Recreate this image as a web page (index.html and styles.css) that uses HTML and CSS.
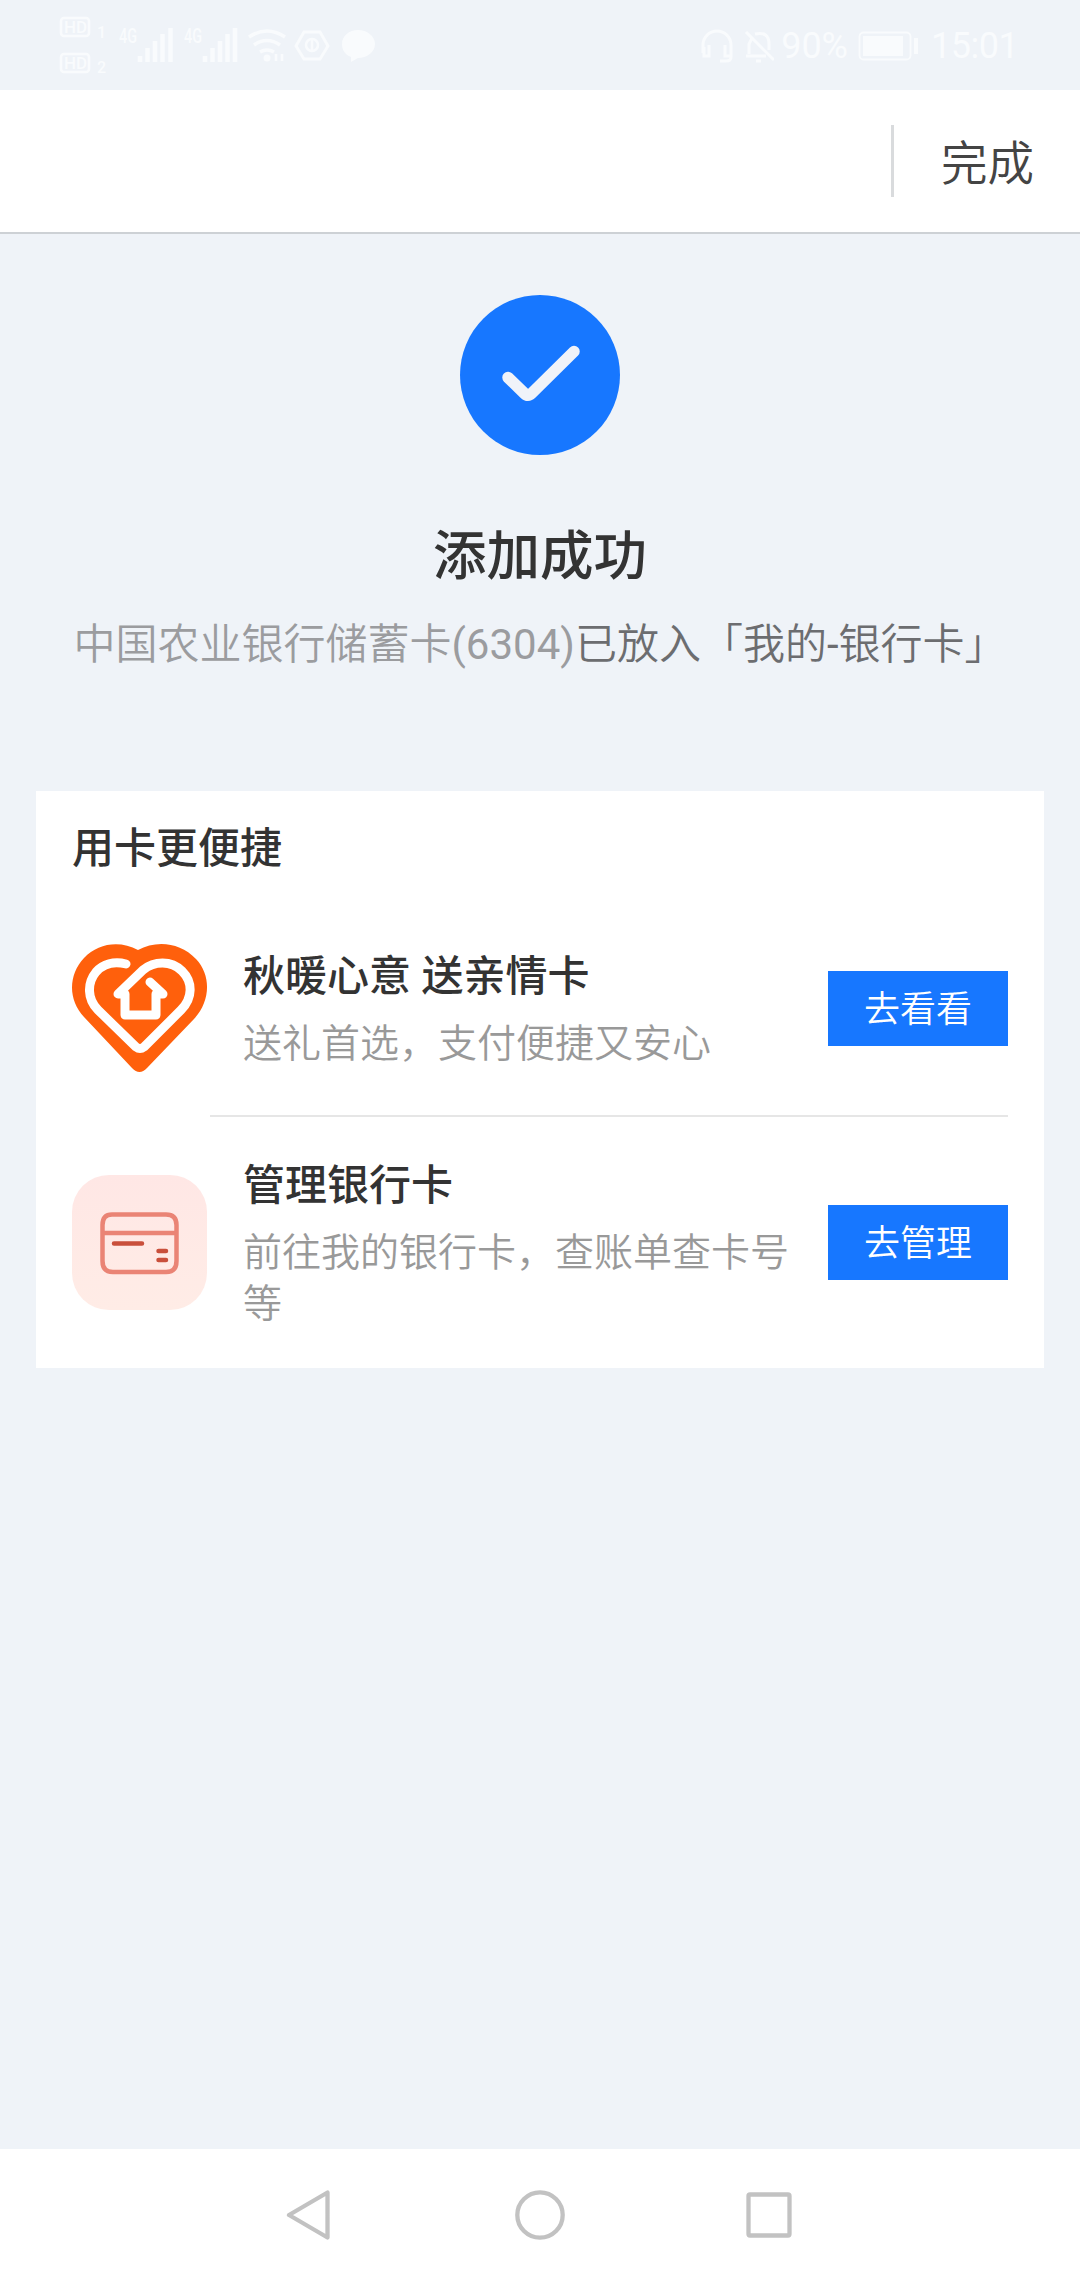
FILE: index.html
```
<!DOCTYPE html>
<html lang="zh-CN">
<head>
<meta charset="utf-8">
<title>添加成功</title>
<link rel="stylesheet" href="styles.css">
</head>
<body>
<div class="screen">
  <div class="status">
    <svg class="status-left" width="350" height="90" viewBox="0 0 350 90" fill="none" stroke="currentColor" stroke-width="2.5">
      <rect x="21" y="18" width="28" height="18" rx="3"/>
      <rect x="21" y="54" width="28" height="18" rx="3"/>
      <g class="status-tiny">
        <text x="24" y="33" textLength="23" lengthAdjust="spacingAndGlyphs">HD</text><text x="24" y="69" textLength="23" lengthAdjust="spacingAndGlyphs">HD</text>
        <text x="57" y="38">1</text><text x="57" y="73">2</text>
        <g class="status-net"><text x="79" y="43" textLength="18" lengthAdjust="spacingAndGlyphs">4G</text><text x="144" y="43" textLength="18" lengthAdjust="spacingAndGlyphs">4G</text></g>
      </g>
      <g stroke-width="4.5">
        <path d="M100 62v-6M107.500 62V48M115 62V41M122.500 62V34M130.500 62V28"/>
        <path d="M165 62v-6M172.500 62V48M180 62V41M187.500 62V34M195 62V28"/>
        <path d="M209 37q18-12 36 0M214 45q13-9 26 0M220 52q7-4 14 0" stroke-width="3.500"/>
      </g>
      <circle cx="227" cy="58" r="3.500" fill="currentColor" stroke="none"/>
      <path d="M236 61v-7M242 54v7"/>
      <path d="M264 32h16l8 14-8 13h-16l-8-13z" stroke-width="3"/>
      <circle cx="272" cy="45" r="6"/><path d="M272 40v10"/>
      <path d="M318 30c9 0 17 6 17 14s-8 14-17 14l-7 4v-5c-6-2-9-7-9-13 0-8 7-14 16-14z" fill="currentColor" stroke="none"/>
    </svg>
    <div class="status-right">
      <svg width="74" height="36" viewBox="0 0 74 36" fill="none" stroke="currentColor" stroke-width="3">
        <path d="M3 25V17a14 14 0 0 1 28 0v12q0 4-5 4h-6M9 17v11H4v-9M25 17v11h5"/>
        <path d="M46 4l28 28M46 28h20M49 26V16l3-6M55 6q14-3 14 10v6M56 33h5"/>
      </svg>
      <span class="battery-text">90%</span>
      <svg width="61" height="30" viewBox="0 0 61 30">
        <rect x="1.500" y="1.500" width="51" height="27" rx="4" fill="none" stroke="currentColor" stroke-width="1.800"/>
        <path d="M5 5h40v20H5zM56 7h4v16h-4z" fill="currentColor"/>
      </svg>
      <span class="clock">15:01</span>
    </div>
  </div>

  <header class="header"><span class="header-line"></span><span class="done">完成</span></header>

  <main class="content">
    <svg class="success" width="160" height="160" viewBox="0 0 160 160">
      <circle cx="80" cy="80" r="80" fill="#1777ff"/>
      <path d="M48 82.500l16.500 16q3.500 3.500 7 0L114 56.500" fill="none" stroke="#f0f3f9" stroke-width="11.500" stroke-linecap="round"/>
    </svg>
    <h1 class="title">添加成功</h1>
    <p class="desc"><span class="bank">中国农业银行储蓄卡<span class="digits">(6304)</span></span>已放入「我的<span class="digits">-</span>银行卡」</p>

    <section class="card">
      <h2 class="card-title">用卡更便捷</h2>
      <div class="row row-gift">
        <svg class="icon" width="136" height="136" viewBox="0 0 136 136" fill="none" stroke="#fff" stroke-width="9" stroke-linecap="round" stroke-linejoin="round">
          <path d="M66 9C48-1 26 2 12 17C-4 34-4 59 12 76L60 127Q67.500 135 75 127L122 78C138 61 140 35 124 18C108 1 84-1 66 9Z" fill="#ff600c" stroke="none"/>
          <path d="M54 23C42 20 31 23 24 31C15 42 15 58 26 69L64 106Q68 109 72 106L109 69C121 57 121 41 110 30C99 19 82 20 71 29L46 53H53V74H84V53H91L78 41"/>
        </svg>
        <div class="info"><h3>秋暖心意 送亲情卡</h3><p>送礼首选，支付便捷又安心</p></div>
        <button class="action">去看看</button>
      </div>
      <div class="row row-manage">
        <svg class="icon" width="136" height="136" viewBox="0 0 136 136" fill="none">
          <defs><linearGradient id="tile" x1="0" y1="0" x2="0" y2="1"><stop offset="0" stop-color="#ffe7e5"/><stop offset="1" stop-color="#ffece6"/></linearGradient></defs>
          <rect width="135" height="135" rx="37" fill="url(#tile)"/>
          <path d="M40 39.500h54q10.500 0 10.500 10.500v36q0 11-10.500 11H41q-10.500 0-10.500-11V50q0-10.500 9.500-10.500zM31 58h73" stroke="#ea8475" stroke-width="4.500"/>
          <path d="M42 68.500h28M86.500 76h7.500M86.500 85h7.500" stroke="#c94f3b" stroke-width="4.500" stroke-linecap="round"/>
        </svg>
        <div class="info"><h3>管理银行卡</h3><p>前往我的银行卡，查账单查卡号等</p></div>
        <button class="action">去管理</button>
      </div>
    </section>
  </main>

  <nav class="nav">
    <svg width="50" height="50" viewBox="0 0 50 50"><path d="M41.500 2.500V47.500L3 25Z"/></svg>
    <svg width="50" height="50" viewBox="0 0 50 50"><circle cx="25" cy="25" r="22.700"/></svg>
    <svg width="50" height="50" viewBox="0 0 50 50"><rect x="4.500" y="4.500" width="41" height="41" rx="1.500"/></svg>
  </nav>
</div>
</body>
</html>
```
FILE: styles.css
```
* { box-sizing: border-box; margin: 0; padding: 0; }
body { font-family: Roboto, "Noto Sans CJK SC", sans-serif; background: #eff3f8; color: #333; }
svg { display: block; flex: none; }
.screen { width: 1080px; height: 2280px; display: flex; flex-direction: column; overflow: hidden; }

.status { height: 90px; flex: none; display: flex; justify-content: space-between; padding: 0 65px 0 40px; color: #f9fbfd; }
.status-tiny { font-size: 16px; font-weight: 500; fill: currentColor; stroke: none; }
.status-net { font-size: 20px; }
.status-right { display: flex; align-items: center; height: 92px; }
.battery-text { font-size: 36px; margin: 0 10px 0 7px; }
.clock { font-size: 36px; margin-left: 12px; width: 84px; letter-spacing: -0.5px; }

.header { height: 144px; flex: none; display: flex; align-items: center; justify-content: flex-end; background: #fff; border-bottom: 2px solid #cdd1d5; padding-right: 46px; }
.header-line { width: 3px; height: 72px; background: #d9dbdd; margin-right: 47px; }
.done { font-size: 46.500px; line-height: 72px; color: #444; font-weight: 350; padding-top: 5px; }

.content { flex: 1; display: flex; flex-direction: column; align-items: center; padding: 61px 36px 0; }
.title { font-size: 53.5px; line-height: 72px; font-weight: 500; margin-top: 66px; }
.desc { font-size: 42px; line-height: 60px; color: #6c6d70; font-weight: 350; margin-top: 22px; white-space: nowrap; }
.bank { color: #9b9c9f; }
.digits { font-weight: 400; }

.card { width: 1008px; height: 577px; margin-top: 116px; background: #fff; padding: 28px 36px 0; }
.card-title { font-size: 42px; line-height: 60px; font-weight: 500; }
.row { display: flex; align-items: center; position: relative; }
.row-gift { height: 236px; padding-top: 23px; }
.row-manage { height: 255px; }
.icon { margin-right: 35px; }
.info { flex: 1; }
.info h3 { font-size: 42px; line-height: 60px; font-weight: 500; }
.info p { font-size: 39px; line-height: 51px; color: #999; font-weight: 350; margin-top: 12px; width: 550px; }
.action { width: 180px; height: 75px; flex: none; border: 0; padding-top: 3px; background: #1777ff; color: #fff; font: 350 36px/72px Roboto, "Noto Sans CJK SC", sans-serif; }
.row-manage::before { content: ""; position: absolute; left: 138px; right: 0; top: 0; height: 2px; background: #e6e6e6; }

.nav { height: 131px; flex: none; background: #fff; display: flex; justify-content: center; gap: 179px; padding-top: 41px; }
.nav path, .nav circle, .nav rect { fill: none; stroke: #c2c2c2; stroke-width: 4.300; stroke-linejoin: round; }
```
